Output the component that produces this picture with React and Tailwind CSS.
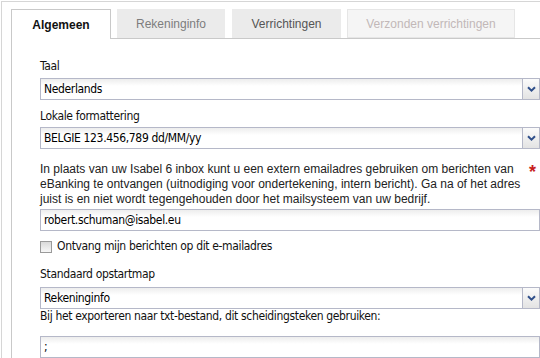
import React from "react";

const labelFont =
  "font-['DejaVu_Sans_Condensed','DejaVu_Sans',sans-serif] text-[12px] leading-[15px] tracking-[-0.35px] text-[#111]";
const fieldBox =
  "h-[22px] w-[500px] border border-[#b5b8c8] bg-[linear-gradient(#ededed,#ffffff_7px)] flex items-center";

function Chevron() {
  return (
    <svg width="9" height="6" viewBox="0 0 9 6">
      <path d="M1 1.2 L4.5 4.6 L8 1.2" fill="none" stroke="#2f4f8a" strokeWidth="2" strokeLinejoin="miter" />
    </svg>
  );
}

function Select({ value }) {
  return (
    <div className={fieldBox}>
      <span className={`${labelFont} flex-1 pl-[3px] text-black`}>{value}</span>
      <div className="h-full w-[17px] border-l border-[#b5b8c8] bg-[linear-gradient(#fbfbfb,#e3e3e3)] flex items-center justify-center">
        <Chevron />
      </div>
    </div>
  );
}

function TextInput({ value }) {
  return (
    <div className={fieldBox}>
      <span className={`${labelFont} pl-[3px] text-black`}>{value}</span>
    </div>
  );
}

export default function App() {
  return (
    <div className="w-[540px] h-[358px] overflow-hidden bg-white pt-px pl-px">
      <div className="h-full border-t border-l border-[#d6d6d6] pl-[9px] pt-[7px]">
        {/* tabs */}
        <div className="flex items-start font-['Liberation_Sans',Arial,sans-serif] text-[12px]">
          <div className="relative z-10 -mb-px h-[30px] w-[100px] border-x border-t border-[#c9c9c9] bg-white flex items-center justify-center font-bold text-[#111]">
            Algemeen
          </div>
          <div className="ml-[6px] h-[29px] w-[108px] bg-[#ebebeb] flex items-center justify-center text-[#7d7d7d]">
            Rekeninginfo
          </div>
          <div className="ml-[7px] h-[29px] w-[109px] bg-[#ebebeb] flex items-center justify-center text-[#555]">
            Verrichtingen
          </div>
          <div className="ml-[6px] h-[29px] w-[168px] border border-[#e6e6e6] bg-[#f5f5f5] flex items-center justify-center text-[#c2b8b8]">
            Verzonden verrichtingen
          </div>
        </div>

        {/* panel */}
        <div className="h-full border-t border-l border-[#c9c9c9] pl-[28px]">
          <div className={`${labelFont} mt-[20px] mb-[4px]`}>Taal</div>
          <Select value="Nederlands" />

          <div className={`${labelFont} mt-[9px] mb-[3px]`}>Lokale formattering</div>
          <Select value="BELGIE 123.456,789 dd/MM/yy" />

          <div className="mt-[13px] flex">
            <p className="w-[482px] font-['Liberation_Sans',Arial,sans-serif] text-[12px] leading-[15px] text-[#222]">
              In plaats van uw Isabel 6 inbox kunt u een extern emailadres gebruiken om berichten van
              <br />
              eBanking te ontvangen (uitnodiging voor ondertekening, intern bericht). Ga na of het adres
              <br />
              juist is en niet wordt tegengehouden door het mailsysteem van uw bedrijf.
            </p>
            <span className="ml-[7px] mt-[3px] font-['Liberation_Sans',Arial,sans-serif] text-[18px] leading-[15px] font-bold text-[#c81e1e]">
              *
            </span>
          </div>
          <div className="mt-[2px]">
            <TextInput value="robert.schuman@isabel.eu" />
          </div>

          <div className="mt-[8px] flex items-center h-[15px]">
            <span className="w-[12px] h-[12px] border border-[#9a9a9a] bg-[linear-gradient(#d9d9d9,#f7f7f7)]" />
            <span className={`${labelFont} ml-[5px]`}>Ontvang mijn berichten op dit e-mailadres</span>
          </div>

          <div className={`${labelFont} mt-[13px] mb-[5px]`}>Standaard opstartmap</div>
          <Select value="Rekeninginfo" />

          <div className={`${labelFont} mt-0 mb-[12px]`}>
            Bij het exporteren naar txt-bestand, dit scheidingsteken gebruiken:
          </div>
          <TextInput value=";" />
        </div>
      </div>
    </div>
  );
}
